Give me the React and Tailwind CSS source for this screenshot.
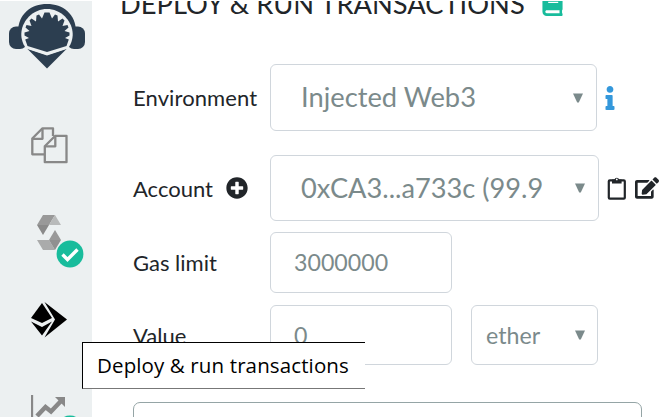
import React from "react";
import { FaPlusCircle, FaInfo, FaEdit, FaBook } from "react-icons/fa";

const box = "flex items-center border-[1.5px] border-[#d0d6dc] rounded-[6px] bg-white text-[#7b8a8b] shrink-0 ";

function Arrow() {
  return (
    <svg width="10" height="10" viewBox="0 0 10 10" className="shrink-0">
      <path d="M0 .5H10L5.8 9.5H4.2Z" fill="#7b8a8b" />
    </svg>
  );
}

function Check() {
  return (
    <svg width="28" height="28" viewBox="0 0 28 28">
      <circle cx="14" cy="14" r="13.4" fill="#18bc9c" />
      <path d="M6.5 14.5L11.5 19.5L21.5 9.5" fill="none" stroke="#fff" strokeWidth="3.4" />
    </svg>
  );
}

function Clipboard() {
  return (
    <svg width="20" height="25" viewBox="0 0 20 25" className="ml-[8px] shrink-0">
      <rect x="1.8" y="4.3" width="16" height="18.4" rx="1" fill="none" stroke="#212529" strokeWidth="2.2" />
      <path d="M5 3.5H7.4A2.5 2.5 0 0 1 12.2 3.5H14.6V7.6H5Z" fill="#212529" />
      <circle cx="9.8" cy="3.4" r=".9" fill="#fff" />
    </svg>
  );
}

function Logo() {
  return (
    <svg width="76" height="66" viewBox="0 0 76 66" className="block">
      <rect x="0" y="22.5" width="18" height="22.5" rx="7" fill="#2c3e50" />
      <rect x="58" y="22.5" width="18" height="22.5" rx="7" fill="#2c3e50" />
      <path d="M9 28C9 10 22 0 38 0S67 10 67 28Z" fill="#2c3e50" />
      <path d="M18 44.5L38 64.5L58 44.5L38 51Z" fill="#2c3e50" />
      <path d="M17 44.5C9 33 12 21 20 12.5C30 2.5 46 2.5 56 12.5C64 21 67 33 59 44.5L38 51.5Z" fill="#ecf0f1" />
      <path d="M18.5 42L16.2 35.5L20 34L15.5 31.5V28.5L20.5 27L16.5 23.5L17.5 21L22.5 22L20.5 16.5L22.5 14.5L27 17.5L27.5 11.5L30 10.5L33 14.5L35.5 8.5H40.5L43 14.5L46 10.5L48.5 11.5L49 17.5L53.5 14.5L55.5 16.5L53.5 22L58.5 21L59.5 23.5L55.5 27L60.5 28.5V31.5L56 34L59.8 35.5L57.5 42L38 48Z" fill="#2c3e50" />
    </svg>
  );
}

function Sidebar() {
  return (
    <aside className="relative w-[92px] h-[416px] mt-px bg-[#ecf0f1] shrink-0">
      <div className="pl-[9px] pt-[3px] h-[126px]"><Logo /></div>
      <svg width="37" height="37" viewBox="0 0 37 37" className="ml-[31px] block" fill="none" stroke="#888" strokeWidth="2.3" strokeLinejoin="round">
        <path d="M13 27.3H1.3V11.5L11.5 1.3H22V9" />
        <path d="M11.5 1.5V11.8H1.5" />
        <path d="M24.3 8.8H35.5V35.2H13.8V19.2Z" />
        <path d="M24.3 9V19.3H14" />
      </svg>
      <div className="relative ml-[37px] mt-[50px] h-[54px] w-[47px]">
        <svg width="25" height="37" viewBox="0 0 25 37" className="mt-[1px] block">
          <path d="M6 1H18L12 11H0Z" fill="#999" />
          <path d="M18 1L24 11H12Z" fill="#b8baba" />
          <path d="M0 11H12L6 21Z" fill="#8a8a8a" />
          <path d="M18 16L24 26H12Z" fill="#999" />
          <path d="M0 26H12L18 36H6Z" fill="#aaabab" />
          <path d="M12 26H24L18 36Z" fill="#909090" />
        </svg>
        <div className="absolute left-[19px] top-[26px]"><Check /></div>
      </div>
      <svg width="38" height="38" viewBox="0 0 38 38" className="ml-[30px] mt-[33px] block">
        <path d="M14.5 1L37 18.5L14.5 36.5L25 18.5Z" fill="#000" />
        <path d="M12 2L22 17L12 22L1 17Z" fill="#000" />
        <path d="M1 20.5L12 26L22 20.5L12 34.5Z" fill="#000" />
      </svg>
      <div className="relative ml-[31px] mt-[55px] h-[23px] w-[54px] overflow-hidden">
        <svg width="38" height="32" viewBox="0 0 38 32">
          <path d="M1 1V32" stroke="#888" strokeWidth="2.3" />
          <path d="M6 22L14.5 13L20 17.5L30 7" fill="none" stroke="#888" strokeWidth="4.5" />
          <path d="M24 3H34V13Z" fill="#888" />
        </svg>
        <div className="absolute left-[25px] top-[21px]"><Check /></div>
      </div>
    </aside>
  );
}

export default function App() {
  return (
    <div className="relative flex w-[670px] h-[417px] overflow-hidden bg-white font-['Lato',sans-serif] text-[22px] text-[#212529] whitespace-nowrap">
      <Sidebar />
      <main className="flex-1 min-w-0">
        <div className="mt-px h-[63px] overflow-hidden">
          <div className="-mt-[14px] ml-[28px] flex h-[34px] items-center gap-[17px] text-[27.3px] leading-[34px]">
            <span className="w-[404px]">DEPLOY &amp; RUN TRANSACTIONS</span>
            <FaBook size={23} color="#18bc9c" />
          </div>
        </div>
        <div className="flex items-center pl-[41px] h-[67px]">
          <span className="w-[137px] tracking-[0.1px]">Environment</span>
          <div className={box + "w-[327px] h-[67px] pl-[30px] pr-[13px] justify-between text-[27.3px]"}>
            <span>Injected Web3</span><Arrow />
          </div>
          <FaInfo size={24} color="#3498db" className="ml-[1px]" />
        </div>
        <div className="flex items-center pl-[41px] mt-[24px] h-[66px]">
          <div className="w-[137px] flex items-center">
            <span className="w-[93px]">Account</span><FaPlusCircle size={22} />
          </div>
          <div className={box + "w-[329px] h-[66px] pl-[30px] pr-[13px] justify-between text-[27.2px]"}>
            <span>0xCA3...a733c (99.9</span><Arrow />
          </div>
          <Clipboard />
          <FaEdit size={24} className="ml-[8px] shrink-0" />
        </div>
        <div className="flex items-center pl-[41px] mt-[11px] h-[61px]">
          <span className="w-[137px]">Gas limit</span>
          <div className={box + "w-[182px] h-[61px] pl-[23px] text-[23.2px]"}>3000000</div>
        </div>
        <div className="flex items-center pl-[41px] mt-[12px] h-[60px]">
          <span className="w-[137px]">Value</span>
          <div className={box + "w-[182px] h-[60px] pl-[23px] text-[23.2px]"}>0</div>
          <div className={box + "ml-[19px] w-[127px] h-[60px] pl-[14px] pr-[12px] justify-between text-[23.2px]"}>
            <span>ether</span><Arrow />
          </div>
        </div>
        <div className="ml-[41px] mt-[37px] h-[40px] w-[509px] rounded-[7px] border-[1.5px] border-[#95a5a6]" />
      </main>
      <div className="absolute left-[82px] top-[342px] flex h-[47px] w-[283px] items-center border-y border-l border-black border-b-[#777] bg-white pl-[14px] font-['Open_Sans',sans-serif] text-[20.5px] tracking-[0.12px] text-black">
        Deploy &amp; run transactions
      </div>
    </div>
  );
}
